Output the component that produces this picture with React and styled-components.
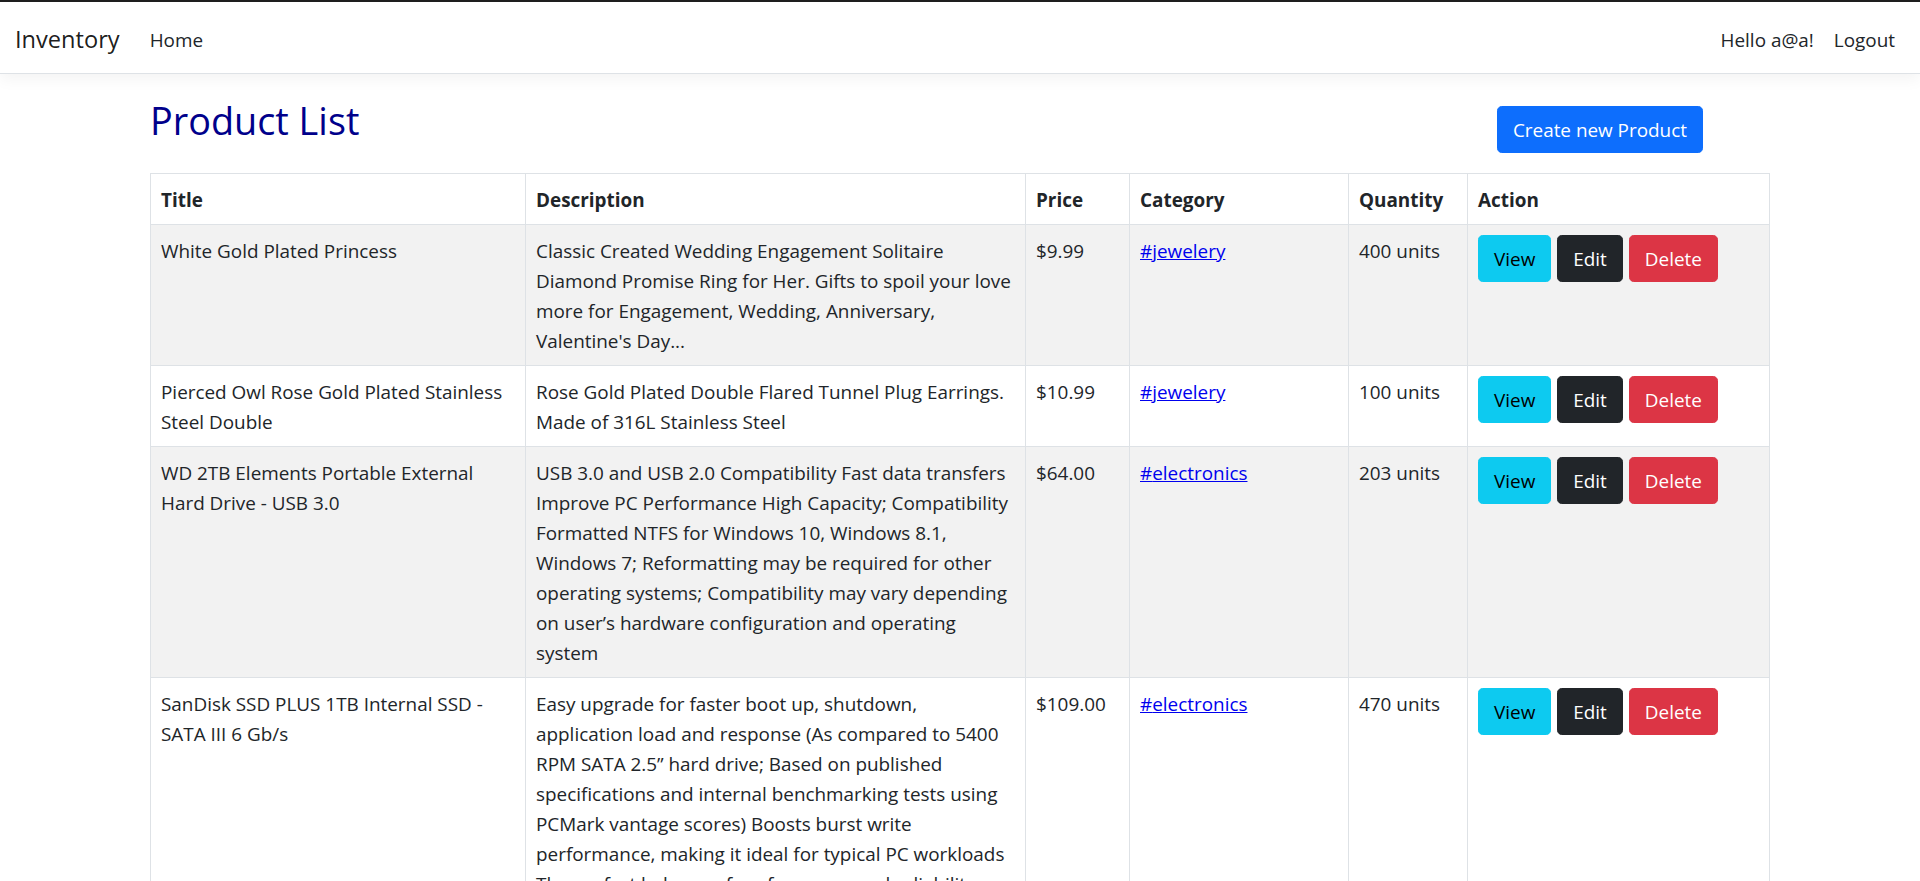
import React from "react";
import styled, { createGlobalStyle } from "styled-components";

const GlobalStyle = createGlobalStyle`
  * { box-sizing: border-box; }
  html { scrollbar-width: none; }
  html::-webkit-scrollbar { display: none; }
  body {
    margin: 0;
    background: #fff;
    color: #212529;
    font-family: "Open Sans", "Noto Sans", sans-serif;
    font-size: 18.9px;
    line-height: 30px;
  }
`;

const TopEdge = styled.div`
  height: 2px;
  background: #1f1f1f;
`;

const Navbar = styled.nav`
  display: flex;
  align-items: center;
  padding: 13px 15px 8px;
  background: #fff;
  border-bottom: 1px solid #dee2e6;
  box-shadow: 0 5px 15px rgba(0, 0, 0, 0.05);
`;

const Brand = styled.a`
  font-size: 23.6px;
  line-height: 37.5px;
  padding: 6.25px 0;
  margin-right: 20px;
  color: rgba(0, 0, 0, 0.9);
  text-decoration: none;
`;

const NavList = styled.ul`
  display: flex;
  list-style: none;
  margin: 0;
  padding: 0;
  margin-left: ${(p) => (p.$end ? "auto" : "0")};
`;

const NavLink = styled.a`
  display: block;
  padding: 10px;
  color: #212529;
  text-decoration: none;
`;

const Container = styled.main`
  width: 1650px;
  margin: 0 auto;
  padding: 23px 15px 15px;
`;

const PageHeader = styled.div`
  display: flex;
  justify-content: space-between;
  align-items: flex-start;
  margin-bottom: 20px;
`;

const PageTitle = styled.h2`
  margin: 0;
  font-size: 37.8px;
  line-height: 48px;
  font-weight: 400;
  color: #00008b;
`;

const variants = {
  primary: { bg: "#0d6efd", fg: "#fff" },
  info: { bg: "#0dcaf0", fg: "#000" },
  dark: { bg: "#212529", fg: "#fff" },
  danger: { bg: "#dc3545", fg: "#fff" },
};

const Button = styled.button`
  display: inline-block;
  font-family: inherit;
  font-size: 18.9px;
  line-height: 30px;
  font-weight: 400;
  padding: 7.5px 15px;
  border: 1px solid ${(p) => variants[p.$variant].bg};
  border-radius: 4.7px;
  background: ${(p) => variants[p.$variant].bg};
  color: ${(p) => variants[p.$variant].fg};
  cursor: pointer;
  white-space: nowrap;
`;

const CreateButton = styled(Button)`
  margin: 9px 67px 0 0;
`;

const Table = styled.table`
  width: 100%;
  table-layout: fixed;
  border-collapse: collapse;
  border: 1px solid #dee2e6;
`;

const Col = styled.col`
  width: ${(p) => p.$w}px;
`;

const HeadCell = styled.th`
  text-align: left;
  font-weight: 700;
  padding: 11px 10px 9px;
  border: 1px solid #dee2e6;
  background: #fff;
  vertical-align: bottom;
`;

const Row = styled.tr`
  background: ${(p) => (p.$striped ? "#f2f2f2" : "#fff")};
`;

const Cell = styled.td`
  padding: ${(p) => (p.$actions ? "10px" : "11px 10px 9px")};
  border: 1px solid #dee2e6;
  vertical-align: top;
`;

const CategoryLink = styled.a`
  color: #0000ee;
  text-decoration: underline;
`;

const Actions = styled.div`
  display: flex;
  gap: 6px;
`;

const columns = [
  { label: "Title", w: 375 },
  { label: "Description", w: 500 },
  { label: "Price", w: 104 },
  { label: "Category", w: 219 },
  { label: "Quantity", w: 119 },
  { label: "Action", w: 302 },
];

const products = [
  {
    title: "White Gold Plated Princess",
    description:
      "Classic Created Wedding Engagement Solitaire Diamond Promise Ring for Her. Gifts to spoil your love more for Engagement, Wedding, Anniversary, Valentine's Day...",
    price: "$9.99",
    category: "jewelery",
    quantity: 400,
  },
  {
    title: "Pierced Owl Rose Gold Plated Stainless Steel Double",
    description:
      "Rose Gold Plated Double Flared Tunnel Plug Earrings. Made of 316L Stainless Steel",
    price: "$10.99",
    category: "jewelery",
    quantity: 100,
  },
  {
    title: "WD 2TB Elements Portable External Hard Drive - USB 3.0",
    description:
      "USB 3.0 and USB 2.0 Compatibility Fast data transfers Improve PC Performance High Capacity; Compatibility Formatted NTFS for Windows 10, Windows 8.1, Windows 7; Reformatting may be required for other operating systems; Compatibility may vary depending on user\u2019s hardware configuration and operating system",
    price: "$64.00",
    category: "electronics",
    quantity: 203,
  },
  {
    title: "SanDisk SSD PLUS 1TB Internal SSD - SATA III 6 Gb/s",
    description:
      "Easy upgrade for faster boot up, shutdown, application load and response (As compared to 5400 RPM SATA 2.5\u201D hard drive; Based on published specifications and internal benchmarking tests using PCMark vantage scores) Boosts burst write performance, making it ideal for typical PC workloads The perfect balance of performance and reliability Read/write speeds of up to 535MB/s/350MB/s (Based on internal testing; Performance may vary depending upon drive capacity, host device, OS and application.)",
    price: "$109.00",
    category: "electronics",
    quantity: 470,
  },
];

export default function App() {
  return (
    <>
      <GlobalStyle />
      <TopEdge />
      <Navbar>
        <Brand href="#">Inventory</Brand>
        <NavList>
          <li>
            <NavLink href="#">Home</NavLink>
          </li>
        </NavList>
        <NavList $end>
          <li>
            <NavLink href="#">Hello a@a!</NavLink>
          </li>
          <li>
            <NavLink href="#">Logout</NavLink>
          </li>
        </NavList>
      </Navbar>
      <Container>
        <PageHeader>
          <PageTitle>Product List</PageTitle>
          <CreateButton $variant="primary">Create new Product</CreateButton>
        </PageHeader>
        <Table>
          <colgroup>
            {columns.map((c) => (
              <Col key={c.label} $w={c.w} />
            ))}
          </colgroup>
          <thead>
            <tr>
              {columns.map((c) => (
                <HeadCell key={c.label}>{c.label}</HeadCell>
              ))}
            </tr>
          </thead>
          <tbody>
            {products.map((p, i) => (
              <Row key={p.title} $striped={i % 2 === 0}>
                <Cell>{p.title}</Cell>
                <Cell>{p.description}</Cell>
                <Cell>{p.price}</Cell>
                <Cell>
                  <CategoryLink href="#">#{p.category}</CategoryLink>
                </Cell>
                <Cell>{p.quantity} units</Cell>
                <Cell $actions>
                  <Actions>
                    <Button $variant="info">View</Button>
                    <Button $variant="dark">Edit</Button>
                    <Button $variant="danger">Delete</Button>
                  </Actions>
                </Cell>
              </Row>
            ))}
          </tbody>
        </Table>
      </Container>
    </>
  );
}
